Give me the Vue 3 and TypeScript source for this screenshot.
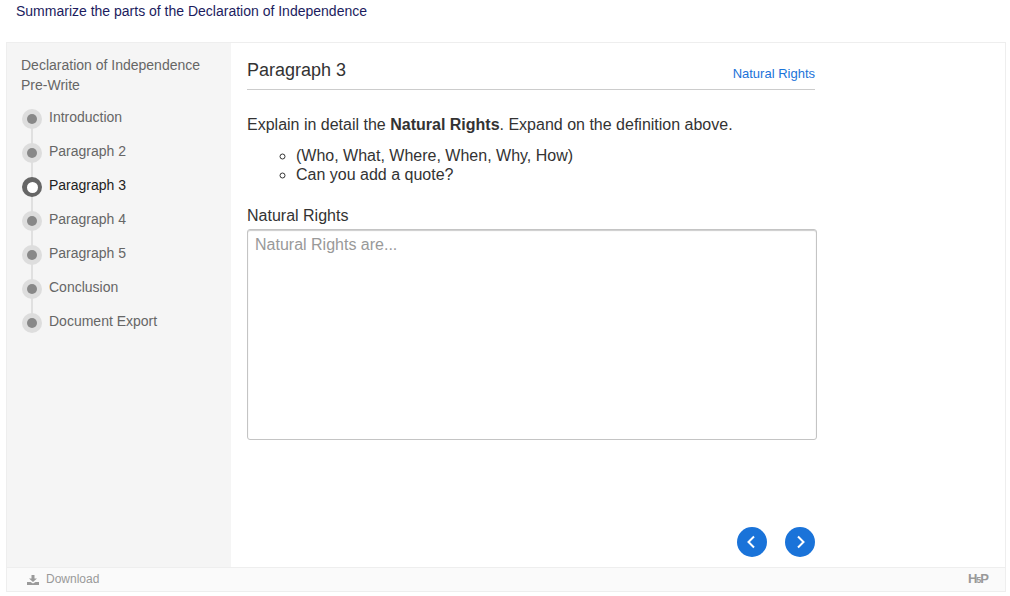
<script setup lang="ts">
interface Step { label: string; active?: boolean }
const steps: Step[] = [
  { label: 'Introduction' },
  { label: 'Paragraph 2' },
  { label: 'Paragraph 3', active: true },
  { label: 'Paragraph 4' },
  { label: 'Paragraph 5' },
  { label: 'Conclusion' },
  { label: 'Document Export' },
]
</script>

<template>
  <div class="page">
    <div class="question">Summarize the parts of the Declaration of Independence</div>
    <div class="frame">
      <div class="content">
        <aside class="sidebar">
          <div class="side-title">Declaration of Independence<br />Pre-Write</div>
          <ul class="steps">
            <li v-for="s in steps" :key="s.label" class="step" :class="{ active: s.active }">
              <span class="dot"></span>
              <span class="step-label">{{ s.label }}</span>
            </li>
          </ul>
        </aside>
        <main class="main">
          <div class="column">
            <header class="head">
              <h2 class="head-title">Paragraph 3</h2>
              <a class="head-link">Natural Rights</a>
            </header>
            <p class="intro">Explain in detail the <b>Natural Rights</b>. Expand on the definition above.</p>
            <ul class="bullets">
              <li>(Who, What, Where, When, Why, How)</li>
              <li>Can you add a quote?</li>
            </ul>
            <label class="label" for="rights">Natural Rights</label>
            <textarea id="rights" class="area" placeholder="Natural Rights are..."></textarea>
            <div class="nav">
              <button class="nav-btn" aria-label="Previous">
                <svg width="30" height="30" viewBox="0 0 30 30"><path d="M17 9.500 11.500 15l5.500 5.500" fill="none" stroke="#fff" stroke-width="2"/></svg>
              </button>
              <button class="nav-btn" aria-label="Next">
                <svg width="30" height="30" viewBox="0 0 30 30"><path d="M13 9.500 18.500 15 13 20.500" fill="none" stroke="#fff" stroke-width="2"/></svg>
              </button>
            </div>
          </div>
        </main>
      </div>
      <footer class="foot">
        <span class="download">
          <svg class="dl-icon" width="12" height="10" viewBox="0 0 12 10"><path d="M4.500 0h3v3.500H10L6 7 2 3.500h2.500zM0 7h3.500L6 8.500 8.500 7H12v3H0z" fill="#9a9a9a"/></svg>
          Download
        </span>
        <span class="h5p">H<i>5</i>P</span>
      </footer>
    </div>
  </div>
</template>

<style>
html, body { margin: 0; background: #fff; }
</style>

<style scoped>
.page {
  font-family: "Liberation Sans", Arial, sans-serif;
  padding: 0 4px 0 6px;
  height: 596px;
  box-sizing: border-box;
  overflow: hidden;
}
.question {
  height: 42px;
  padding: 3px 0 0 10px;
  box-sizing: border-box;
  font-size: 14px;
  line-height: 16px;
  color: #1c1c5e;
}
.frame {
  width: 1000px;
  height: 550px;
  box-sizing: border-box;
  border: 1px solid #eeeeee;
  display: flex;
  flex-direction: column;
}
.content { flex: 1; display: flex; min-height: 0; }
.sidebar {
  width: 224px;
  background: #f5f5f5;
  padding: 12px 14px 0;
  box-sizing: border-box;
}
.side-title { font-size: 14px; line-height: 20px; color: #666; }
.steps { list-style: none; margin: 12px 0 0; padding: 0; }
.step {
  position: relative;
  height: 34px;
  display: flex;
  align-items: flex-start;
  font-size: 14px;
  line-height: 20px;
  color: #666;
}
.step::before {
  content: "";
  position: absolute;
  left: 10px;
  top: 12px;
  width: 2px;
  height: 34px;
  background: #e0e0e0;
}
.step:last-child::before { display: none; }
.dot {
  position: relative;
  flex: none;
  width: 20px;
  height: 20px;
  margin: 2px 7px 0 1px;
  border-radius: 50%;
  background: #dddddd;
  display: flex;
  align-items: center;
  justify-content: center;
}
.dot::after {
  content: "";
  width: 10px;
  height: 10px;
  border-radius: 50%;
  background: #888888;
}
.step.active { color: #222; }
.step.active .dot { background: #666666; }
.step.active .dot::after { background: #fff; width: 11px; height: 11px; }
.main { flex: 1; padding: 0 16px; }
.column { width: 570px; position: relative; height: 100%; }
.head {
  width: 568px;
  height: 47px;
  box-sizing: border-box;
  border-bottom: 1px solid #cccccc;
  display: flex;
  justify-content: space-between;
  align-items: flex-start;
}
.head-title {
  margin: 16px 0 0;
  font-size: 18px;
  line-height: 22px;
  font-weight: 400;
  color: #333;
}
.head-link { margin-top: 23px; font-size: 13px; line-height: 15px; color: #1a73d9; }
.intro { margin: 25px 0 0; font-size: 16px; line-height: 20px; color: #333; }
.bullets {
  list-style: circle;
  margin: 11px 0 0;
  padding: 0 0 0 49px;
  font-size: 16px;
  line-height: 19px;
  color: #333;
}
.label { display: block; margin-top: 23px; font-size: 16px; line-height: 18px; color: #333; }
.area {
  display: block;
  width: 570px;
  height: 211px;
  margin-top: 4px;
  padding: 5px 7px;
  box-sizing: border-box;
  border: 1px solid #c4c4c4;
  border-radius: 3px;
  box-shadow: inset 0 1px 1px rgba(0, 0, 0, 0.2);
  font-family: inherit;
  font-size: 16px;
  line-height: 20px;
  color: #333;
  resize: none;
  outline: none;
}
.area::placeholder { color: #999; opacity: 1; }
.nav {
  position: absolute;
  right: 2px;
  bottom: 10px;
  display: flex;
  gap: 18px;
}
.nav-btn {
  width: 30px;
  height: 30px;
  padding: 0;
  border: 0;
  border-radius: 50%;
  background: #1a73d9;
  display: block;
}
.nav-btn svg { display: block; }
.foot {
  flex: none;
  height: 24px;
  box-sizing: border-box;
  border-top: 1px solid #eeeeee;
  background: #fafafa;
  display: flex;
  align-items: center;
  justify-content: space-between;
  padding: 0 17px 2px 20px;
}
.download { display: flex; align-items: center; gap: 7px; font-size: 12px; color: #999; }
.dl-icon { margin-top: 2px; }
.h5p { margin-top: 2px; font-size: 13px; line-height: 13px; font-weight: 700; color: #999; letter-spacing: -1px; }
.h5p i { font-style: normal; font-size: 9px; }
</style>
